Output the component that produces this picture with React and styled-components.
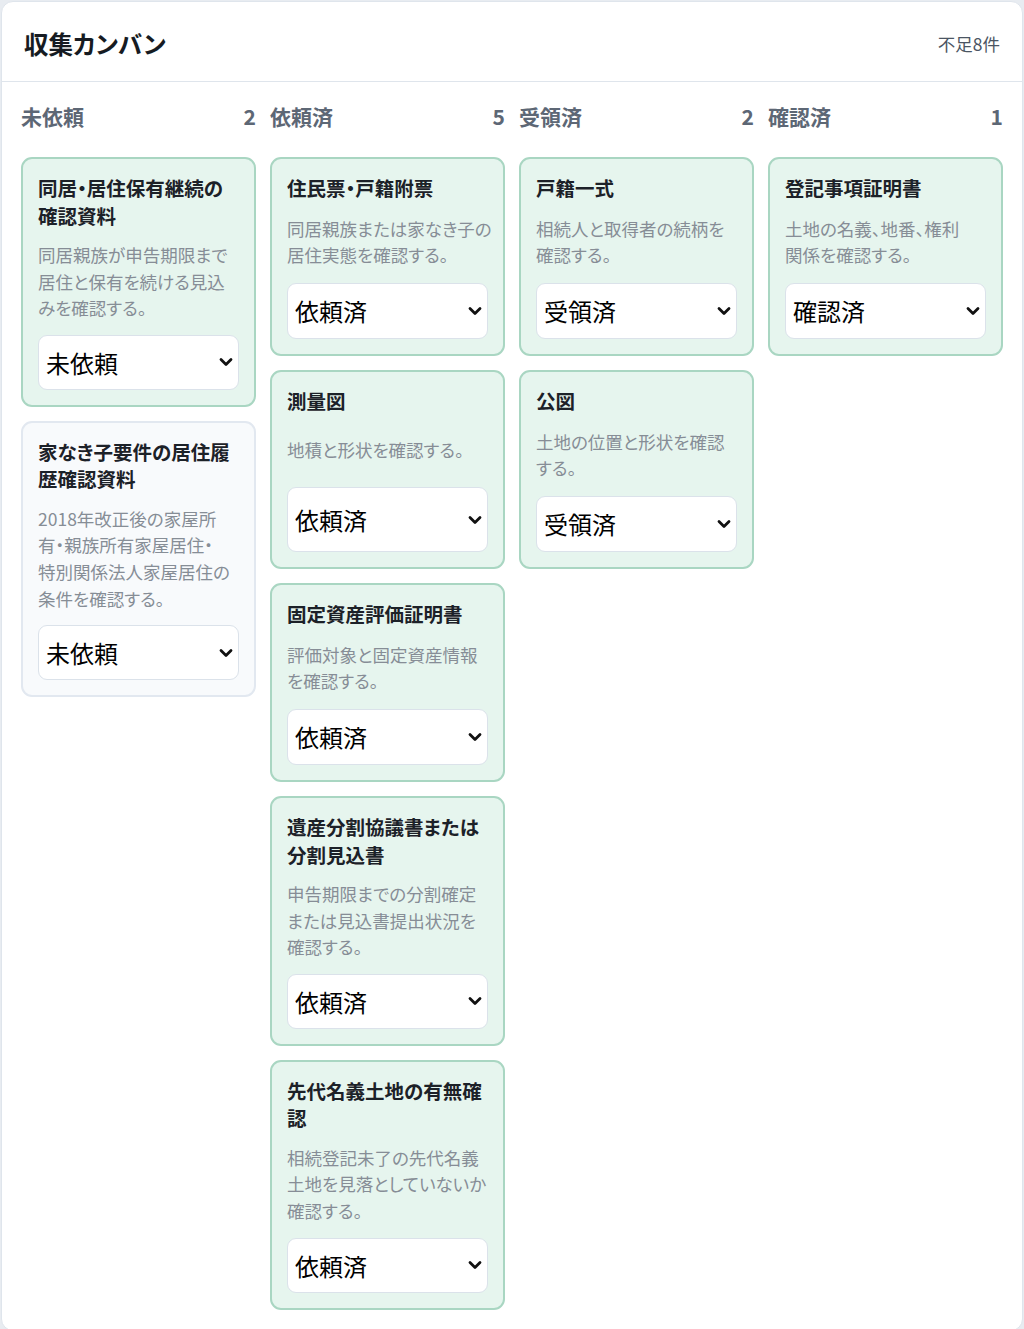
import React from 'react';
import styled, { createGlobalStyle } from 'styled-components';

const GlobalStyle = createGlobalStyle`
  html, body {
    margin: 0;
    padding: 0;
  }
  body {
    background: #e8ecf1;
    padding: 1px;
    font-family: "Noto Sans CJK JP", "Noto Sans", sans-serif;
    font-feature-settings: "palt";
  }
  * {
    box-sizing: border-box;
  }
`;

const STATUSES = ['未依頼', '依頼済', '受領済', '確認済'];

// desc is kept as the lines shown on the board
const columns = [
  {
    name: '未依頼',
    cards: [
      {
        title: '同居・居住保有継続の確認資料',
        desc: ['同居親族が申告期限まで', '居住と保有を続ける見込', 'みを確認する。'],
        status: '未依頼',
      },
      {
        title: '家なき子要件の居住履歴確認資料',
        desc: ['2018年改正後の家屋所', '有・親族所有家屋居住・', '特別関係法人家屋居住の', '条件を確認する。'],
        status: '未依頼',
        pending: true,
      },
    ],
  },
  {
    name: '依頼済',
    cards: [
      { title: '住民票・戸籍附票', desc: ['同居親族または家なき子の', '居住実態を確認する。'], status: '依頼済' },
      { title: '測量図', desc: ['地積と形状を確認する。'], status: '依頼済' },
      { title: '固定資産評価証明書', desc: ['評価対象と固定資産情報', 'を確認する。'], status: '依頼済' },
      {
        title: '遺産分割協議書または分割見込書',
        desc: ['申告期限までの分割確定', 'または見込書提出状況を', '確認する。'],
        status: '依頼済',
      },
      {
        title: '先代名義土地の有無確認',
        desc: ['相続登記未了の先代名義', '土地を見落としていないか', '確認する。'],
        status: '依頼済',
      },
    ],
  },
  {
    name: '受領済',
    cards: [
      { title: '戸籍一式', desc: ['相続人と取得者の続柄を', '確認する。'], status: '受領済' },
      { title: '公図', desc: ['土地の位置と形状を確認', 'する。'], status: '受領済' },
    ],
  },
  {
    name: '確認済',
    cards: [
      { title: '登記事項証明書', desc: ['土地の名義、地番、権利', '関係を確認する。'], status: '確認済' },
    ],
  },
];

function Chevron() {
  return (
    <ChevronIcon width="14" height="9" viewBox="0 0 14 9" aria-hidden="true">
      <polyline points="2,2 7,7 12,2" fill="none" stroke="#111" strokeWidth="2.8" strokeLinecap="round" strokeLinejoin="round" />
    </ChevronIcon>
  );
}

function KanbanCard({ card }) {
  return (
    <Card $pending={card.pending}>
      <CardTitle>{card.title}</CardTitle>
      <CardDesc>
        {card.desc.map((line) => (
          <DescLine key={line}>{line}</DescLine>
        ))}
      </CardDesc>
      <SelectWrap>
        <StatusSelect defaultValue={card.status}>
          {STATUSES.map((s) => (
            <option key={s} value={s}>{s}</option>
          ))}
        </StatusSelect>
        <Chevron />
      </SelectWrap>
    </Card>
  );
}

export default function App() {
  return (
    <>
      <GlobalStyle />
      <Panel>
        <Header>
          <Title>収集カンバン</Title>
          <Shortage>不足8件</Shortage>
        </Header>
        <Board>
          {columns.map((col) => (
            <Column key={col.name}>
              <ColumnHead>
                <span>{col.name}</span>
                <span>{col.cards.length}</span>
              </ColumnHead>
              <CardList>
                {col.cards.map((card) => (
                  <KanbanCard key={card.title} card={card} />
                ))}
              </CardList>
            </Column>
          ))}
        </Board>
      </Panel>
    </>
  );
}

const Panel = styled.div`
  background: #ffffff;
  border: 1px solid #dfe5ec;
  border-radius: 12px;
  min-height: 1327px;
`;

const Header = styled.header`
  height: 80px;
  display: flex;
  align-items: center;
  justify-content: space-between;
  padding: 3px 22px 0 22px;
  border-bottom: 1px solid #dfe5ec;
`;

const Title = styled.h1`
  margin: 0;
  font-size: 24.5px;
  font-weight: 700;
  color: #161b22;
`;

const Shortage = styled.span`
  font-size: 17.5px;
  color: #4b5563;
`;

const Board = styled.div`
  display: grid;
  grid-template-columns: repeat(4, minmax(0, 1fr));
  gap: 14px;
  align-items: start;
  padding: 20px 19px;
`;

const Column = styled.section`
  display: flex;
  flex-direction: column;
  min-width: 0;
`;

const ColumnHead = styled.div`
  display: flex;
  justify-content: space-between;
  align-items: center;
  height: 28px;
  margin-bottom: 27px;
  font-size: 21px;
  font-weight: 600;
  color: #5d6775;
`;

const CardList = styled.div`
  display: flex;
  flex-direction: column;
  gap: 14px;
`;

const Card = styled.article`
  display: grid;
  grid-template-columns: minmax(0, 1fr);
  gap: 13px;
  min-height: 199px;
  padding: 15px;
  border-radius: 11px;
  border: 2px solid ${(p) => (p.$pending ? '#e2e8f0' : '#a9d6c2')};
  background: ${(p) => (p.$pending ? '#f8fafc' : '#e6f5ee')};
`;

const CardTitle = styled.h3`
  margin: 0;
  font-size: 19.5px;
  line-height: 27.5px;
  font-weight: 700;
  color: #1c2128;
`;

const CardDesc = styled.p`
  margin: 0;
  font-size: 17.5px;
  line-height: 26.6px;
  color: #868d96;
`;

const DescLine = styled.span`
  display: block;
  white-space: nowrap;
`;

const SelectWrap = styled.div`
  position: relative;
  display: flex;
`;

const StatusSelect = styled.select`
  appearance: none;
  width: 100%;
  min-height: 55px;
  padding: 0 30px 0 7px;
  font-family: "Noto Sans CJK JP", "Noto Sans", sans-serif;
  font-size: 24px;
  color: #000000;
  background: #ffffff;
  border: 1px solid #dbe2ea;
  border-radius: 9px;
`;

const ChevronIcon = styled.svg`
  position: absolute;
  right: 6px;
  top: 50%;
  transform: translateY(-50%);
  pointer-events: none;
`;
